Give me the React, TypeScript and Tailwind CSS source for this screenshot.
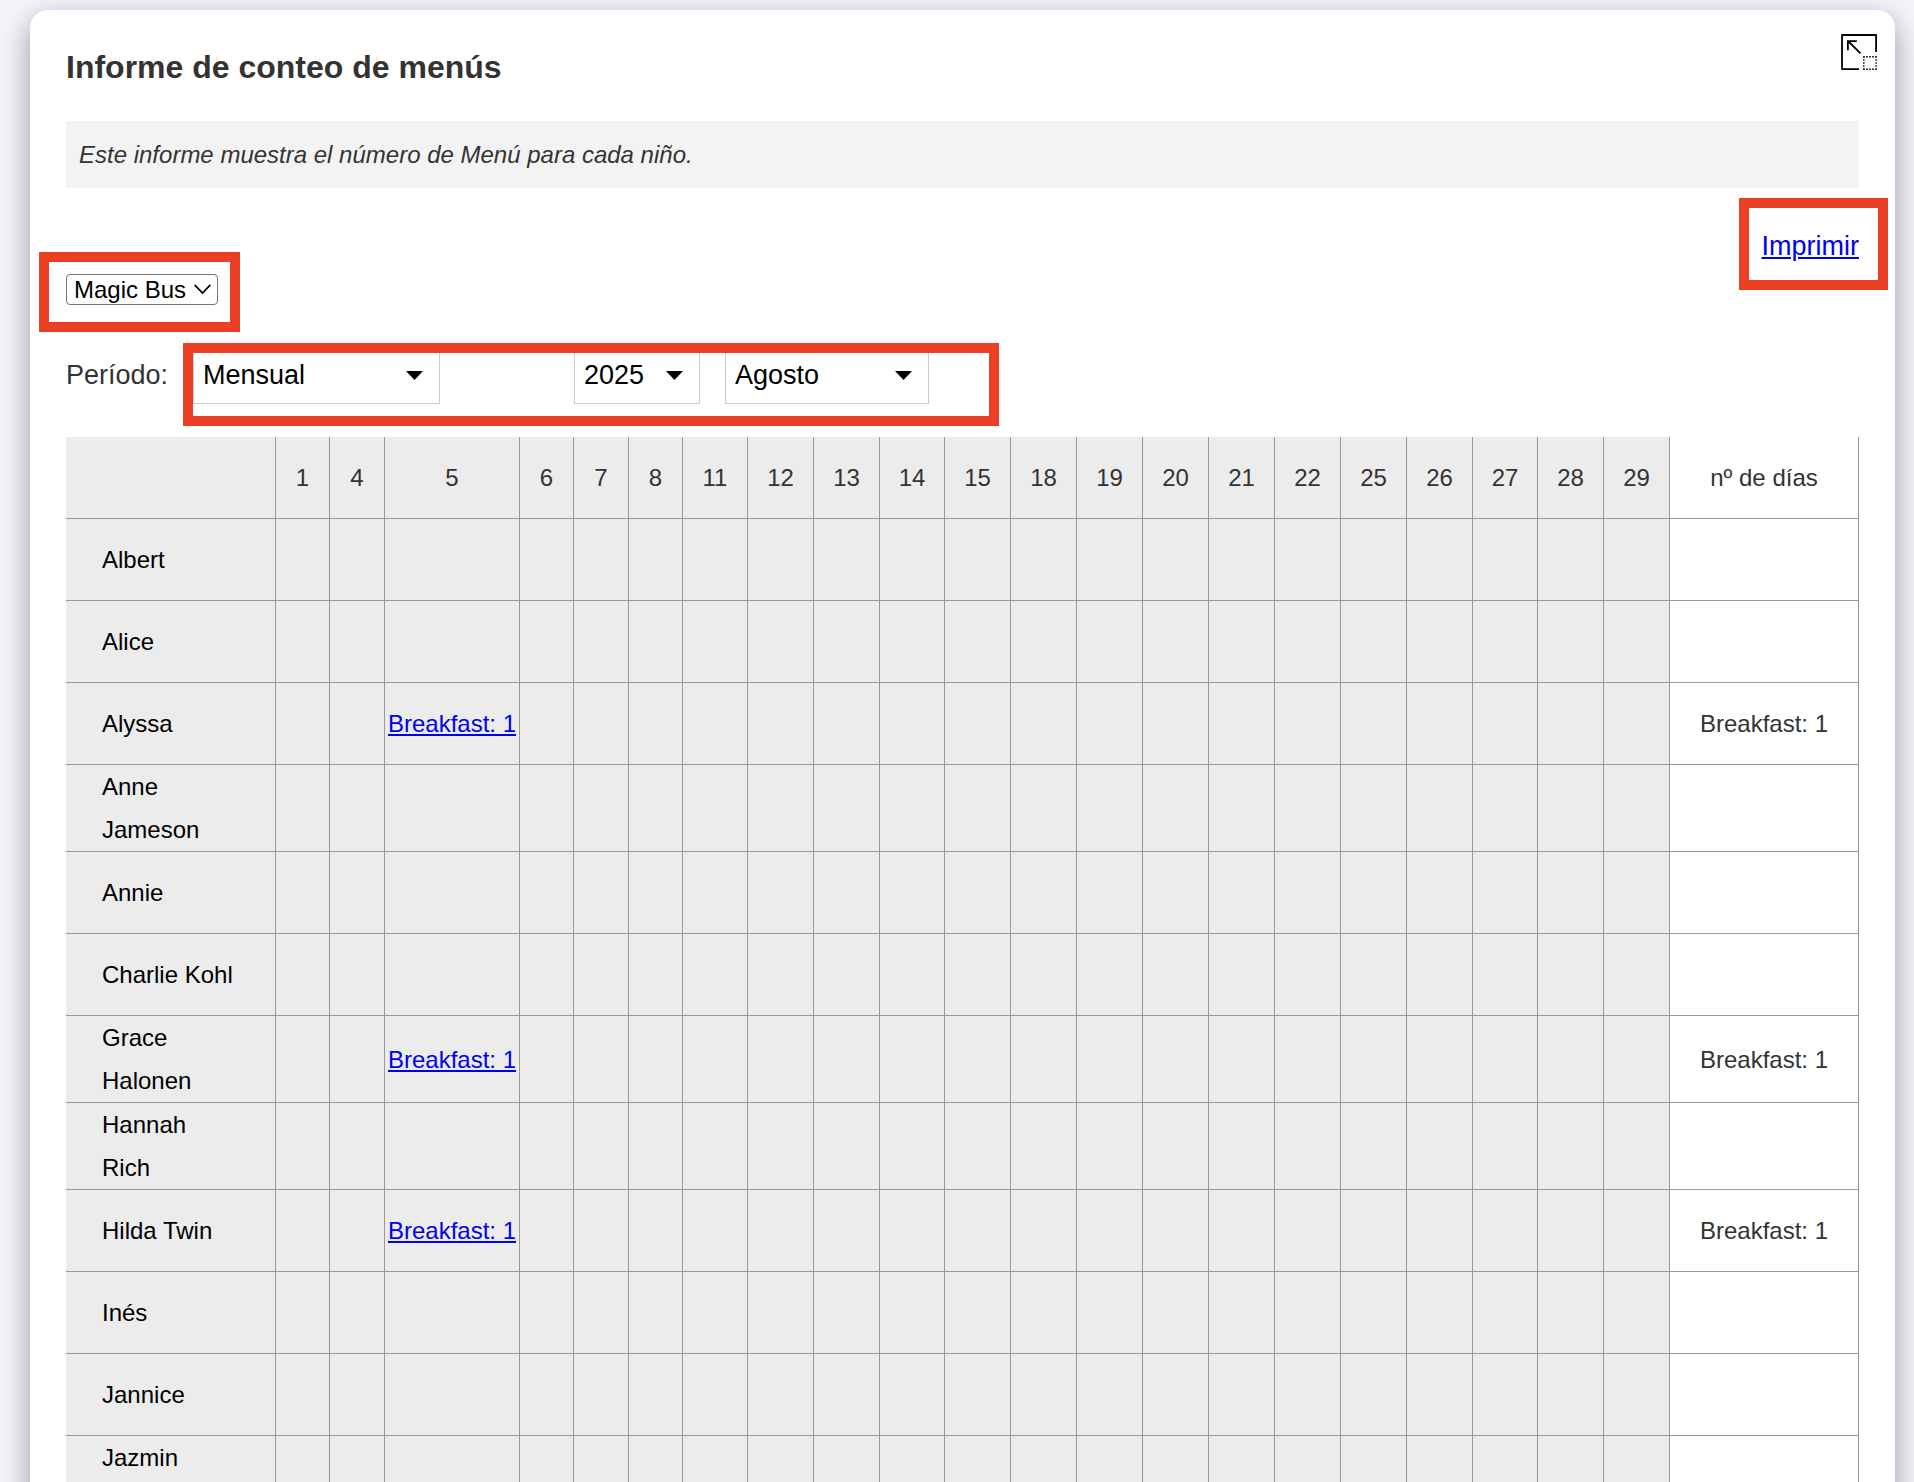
import React from 'react';

interface DayColumn {
  day: number;
  width: string;
}

interface ChildRow {
  name: string;
  meals: Record<number, string>;
  total?: string;
}

const days: DayColumn[] = [
  { day: 1, width: 'w-[54px]' },
  { day: 4, width: 'w-[55px]' },
  { day: 5, width: 'w-[135px]' },
  { day: 6, width: 'w-[54px]' },
  { day: 7, width: 'w-[55px]' },
  { day: 8, width: 'w-[54px]' },
  { day: 11, width: 'w-[65px]' },
  { day: 12, width: 'w-[66px]' },
  { day: 13, width: 'w-[66px]' },
  { day: 14, width: 'w-[65px]' },
  { day: 15, width: 'w-[66px]' },
  { day: 18, width: 'w-[66px]' },
  { day: 19, width: 'w-[66px]' },
  { day: 20, width: 'w-[66px]' },
  { day: 21, width: 'w-[66px]' },
  { day: 22, width: 'w-[66px]' },
  { day: 25, width: 'w-[66px]' },
  { day: 26, width: 'w-[66px]' },
  { day: 27, width: 'w-[65px]' },
  { day: 28, width: 'w-[66px]' },
  { day: 29, width: 'w-[66px]' },
];

const rows: ChildRow[] = [
  { name: 'Albert', meals: {} },
  { name: 'Alice', meals: {} },
  { name: 'Alyssa', meals: { 5: 'Breakfast: 1' }, total: 'Breakfast: 1' },
  { name: 'Anne\nJameson', meals: {} },
  { name: 'Annie', meals: {} },
  { name: 'Charlie Kohl', meals: {} },
  { name: 'Grace\nHalonen', meals: { 5: 'Breakfast: 1' }, total: 'Breakfast: 1' },
  { name: 'Hannah\nRich', meals: {} },
  { name: 'Hilda Twin', meals: { 5: 'Breakfast: 1' }, total: 'Breakfast: 1' },
  { name: 'Inés', meals: {} },
  { name: 'Jannice', meals: {} },
  { name: 'Jazmin\n\u00a0', meals: {} },
];

interface PeriodSelectProps {
  id?: string;
  label?: string;
  options: string[];
  className: string;
}

const PeriodSelect: React.FC<PeriodSelectProps> = ({ id, label, options, className }) => (
  <div className={`relative ${className}`}>
    <select
      id={id}
      aria-label={label}
      className="block h-[60px] w-full appearance-none border border-[#cccccc] bg-white pl-[9px] pt-[2px] text-[27px] text-black"
    >
      {options.map((option) => (
        <option key={option}>{option}</option>
      ))}
    </select>
    <svg className="pointer-events-none absolute right-[17px] top-[27px]" width="17" height="9" viewBox="0 0 17 9">
      <path d="M0 0H17L8.5 9Z" fill="#000" />
    </svg>
  </div>
);

const ExpandIcon: React.FC = () => (
  <svg width="36" height="36" viewBox="0 0 36 36" fill="none" stroke="#000" strokeWidth="1.8">
    <path d="M35.1 18V1H1V35.1H18" strokeLinejoin="round" />
    <path d="M19.5 19.3L7 7M6.9 16.2V7.1H15.8" />
    <path d="M22.2 22.7H36M22.2 35.2H36M22.8 22.2V36M35.1 22.2V36" strokeWidth="1.4" strokeDasharray="1.6 1.4" />
  </svg>
);

const App: React.FC = () => {
  return (
    <div
      className="h-screen overflow-hidden bg-[#f4f5fb] pl-[30px] pr-[19px] pt-[10px] text-[#333333]"
      style={{ fontFamily: '"Liberation Sans", Arial, Helvetica, sans-serif' }}
    >
      <main className="rounded-t-[18px] bg-white shadow-[0_10px_30px_rgba(0,0,0,0.38)]">
        {/* Header */}
        <header className="flex items-start justify-between pb-[33px] pl-9 pr-[18px] pt-6">
          <h1 className="pt-3 text-[32px] font-bold leading-[42px]">Informe de conteo de menús</h1>
          <button type="button" aria-label="Expandir">
            <ExpandIcon />
          </button>
        </header>

        <div className="px-9">
          <p className="bg-[#f3f3f3] px-[13px] py-3 text-[24px] italic leading-[43px]">
            Este informe muestra el número de Menú para cada niño.
          </p>

          {/* Print link */}
          <div className="mt-9 flex justify-end text-[27px] leading-[45px]">
            <div className="relative">
              <a href="#print" className="text-[#0000ee] underline">
                Imprimir
              </a>
              <span className="pointer-events-none absolute -bottom-[21px] -left-[23px] -right-[29px] -top-[26px] border-[10px] border-[#eb4026]" />
            </div>
          </div>

          {/* Group */}
          <div className="flex pt-[5px]">
            <div className="relative w-[152px]">
              <select
                aria-label="Grupo"
                className="block h-[31px] w-full appearance-none rounded-[4px] border border-[#767676] bg-white pl-[7px] text-[24px] leading-[29px] text-black"
              >
                <option>Magic Bus</option>
              </select>
              <svg
                className="pointer-events-none absolute right-[7px] top-[10px]"
                width="17"
                height="11"
                viewBox="0 0 17 11"
                fill="none"
                stroke="#000"
                strokeWidth="1.7"
              >
                <path d="M0.7 0.9L8.5 9L16.3 0.9" />
              </svg>
              <span className="pointer-events-none absolute -bottom-[27px] -left-[27px] -right-[22px] -top-[22px] border-[10px] border-[#eb4026]" />
            </div>
          </div>

          {/* Period */}
          <div className="mt-[39px] flex items-center text-[27px]">
            <label htmlFor="period" className="w-[127px] pt-[3px]">
              Período:
            </label>
            <div className="relative flex">
              <PeriodSelect id="period" options={['Mensual', 'Semanal']} className="w-[247px]" />
              <PeriodSelect label="Año" options={['2025', '2024']} className="ml-[134px] w-[126px]" />
              <PeriodSelect label="Mes" options={['Agosto', 'Septiembre']} className="ml-[25px] w-[204px]" />
              <span className="pointer-events-none absolute -bottom-[22px] -left-[10px] -right-[70px] -top-px border-[10px] border-[#eb4026]" />
            </div>
          </div>

          {/* Counts */}
          <table className="mt-[33px] w-full table-fixed border-separate border-spacing-0 text-center text-[24px] leading-[43px]">
            <thead>
              <tr className="h-[82px]">
                <th className="w-[210px] border-b border-r border-[#999999] bg-[#ececec]" />
                {days.map(({ day, width }) => (
                  <th key={day} className={`border-b border-r border-[#999999] bg-[#ececec] font-normal ${width}`}>
                    {day}
                  </th>
                ))}
                <th className="border-b border-r border-[#999999] font-normal">nº de días</th>
              </tr>
            </thead>
            <tbody>
              {rows.map((row) => (
                <tr key={row.name} className="h-[82px]">
                  <th className="whitespace-pre-line border-b border-r border-[#999999] bg-[#ececec] pl-9 text-left font-normal text-black">
                    {row.name}
                  </th>
                  {days.map(({ day }) => (
                    <td key={day} className="border-b border-r border-[#999999] bg-[#ececec]">
                      {row.meals[day] && (
                        <a href="#detail" className="whitespace-nowrap text-[#0000ee] underline">
                          {row.meals[day]}
                        </a>
                      )}
                    </td>
                  ))}
                  <td className="border-b border-r border-[#999999]">{row.total}</td>
                </tr>
              ))}
            </tbody>
          </table>
        </div>
      </main>
    </div>
  );
};

export default App;
